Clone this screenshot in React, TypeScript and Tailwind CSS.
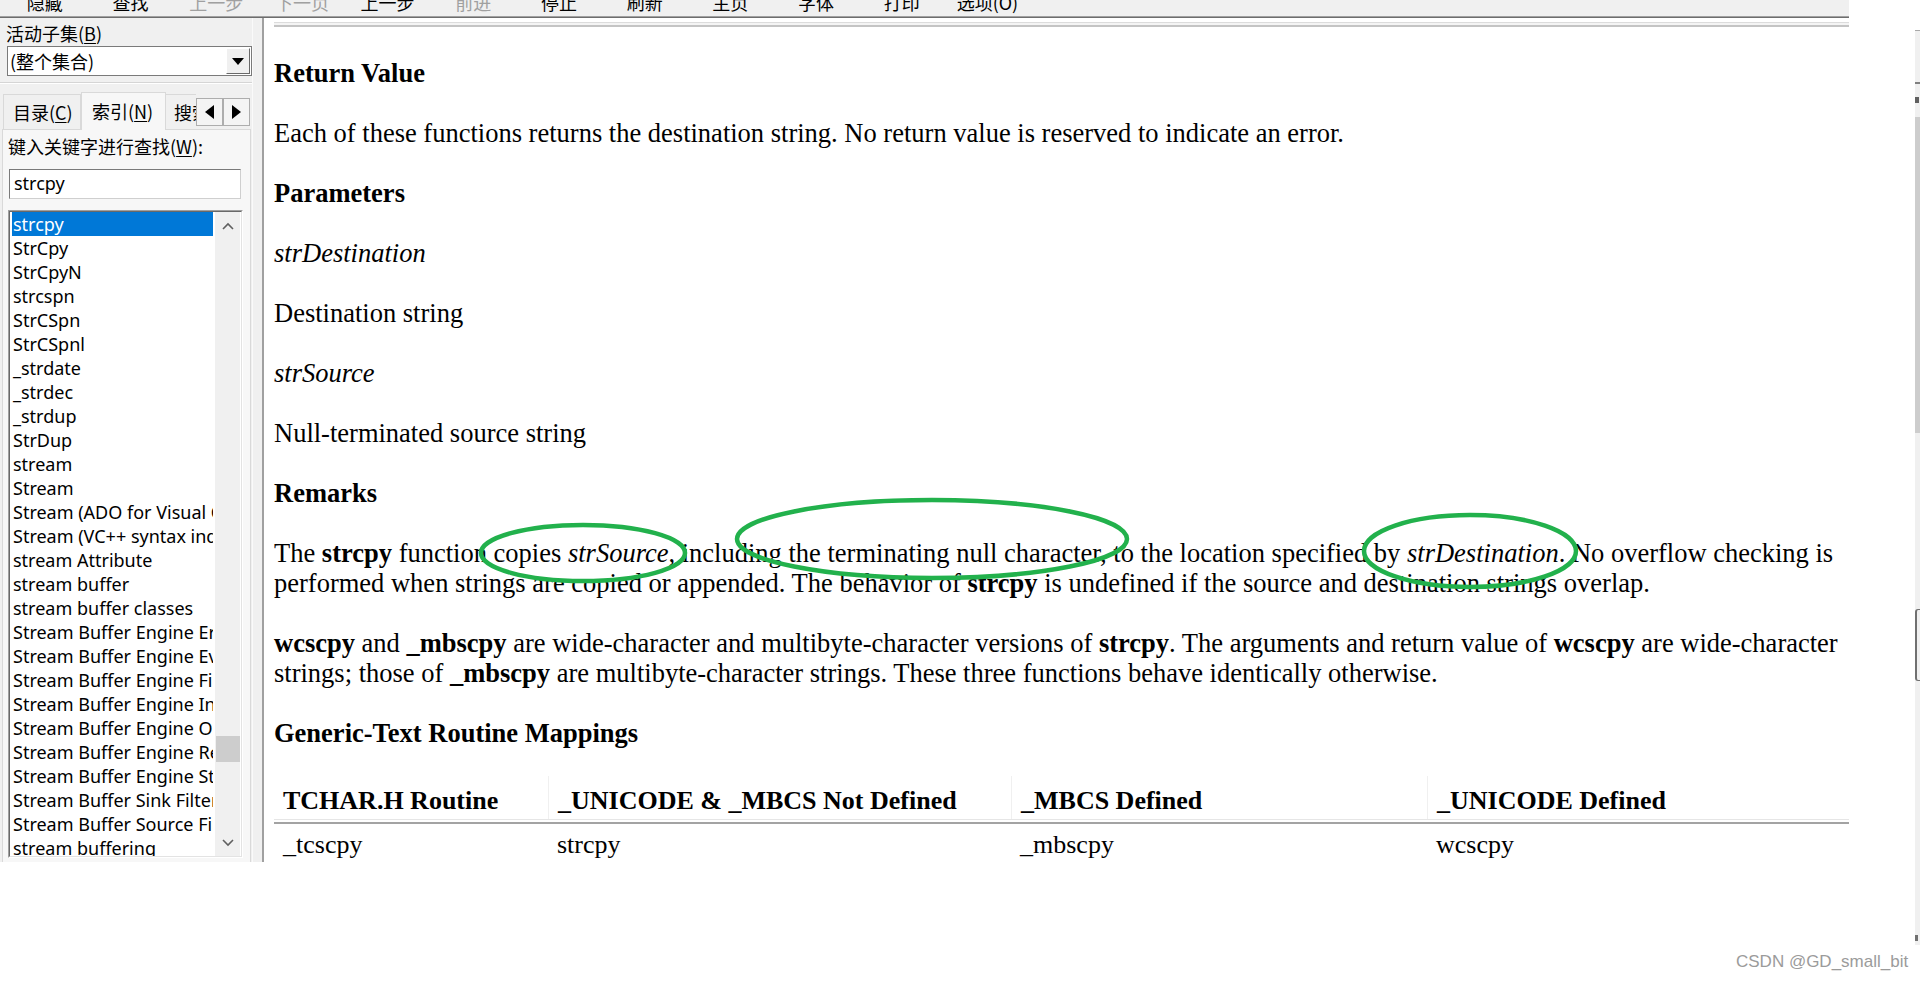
import React from "react";

const toolButtons = [
  { label: "隐藏", on: true },
  { label: "查找", on: true },
  { label: "上一步", on: false },
  { label: "下一页", on: false },
  { label: "上一步", on: true },
  { label: "前进", on: false },
  { label: "停止", on: true },
  { label: "刷新", on: true },
  { label: "主页", on: true },
  { label: "字体", on: true },
  { label: "打印", on: true },
  { label: "选项(O)", on: true },
];

const keywords = [
  "strcpy",
  "StrCpy",
  "StrCpyN",
  "strcspn",
  "StrCSpn",
  "StrCSpnl",
  "_strdate",
  "_strdec",
  "_strdup",
  "StrDup",
  "stream",
  "Stream",
  "Stream (ADO for Visual C++ Syntax)",
  "Stream (VC++ syntax index)",
  "stream Attribute",
  "stream buffer",
  "stream buffer classes",
  "Stream Buffer Engine Errors",
  "Stream Buffer Engine Events",
  "Stream Buffer Engine Filters",
  "Stream Buffer Engine Interfaces",
  "Stream Buffer Engine Objects",
  "Stream Buffer Engine Reference",
  "Stream Buffer Engine Structures",
  "Stream Buffer Sink Filter",
  "Stream Buffer Source Filter",
  "stream buffering",
];

const mappings = [
  ["TCHAR.H Routine", "_UNICODE & _MBCS Not Defined", "_MBCS Defined", "_UNICODE Defined"],
  ["_tcscpy", "strcpy", "_mbscpy", "wcscpy"],
];

const colW = ["w-[274px]", "w-[463px]", "w-[416px]", "w-[422px]"];

export default function App() {
  return (
    <div className="relative w-[1920px] h-[981px] bg-white overflow-hidden font-['Noto_Sans_CJK_SC',sans-serif] text-black">
      <div className="flex">
        {/* help viewer window */}
        <div className="w-[1849px] h-[862px] flex flex-col">
          <Toolbar />
          <div className="flex flex-1 min-h-0">
            <LeftPanel />
            <div className="w-[10px] bg-[#f0f0f0] border-l border-[#fafafa]" />
            <Content />
          </div>
        </div>

        <div className="flex-1" />

        {/* edge of the window behind */}
        <div className="w-[5px] mt-[30px] flex flex-col">
          <div className="h-[52px] bg-[#f0f0f0] border-t border-[#a8a8a8]" />
          <div className="h-[2px] bg-[#808080]" />
          <div className="h-[33px] bg-[#f0f0f0] pt-[13px]">
            <div className="h-[6px] w-[4px] bg-[#606060]" />
          </div>
          <div className="h-[316px] bg-[#cdcdcd]" />
          <div className="h-[512px] bg-[#f0f0f0] pt-[176px]">
            <div className="h-[72px] border-l-2 border-t border-b border-[#707070] rounded-tl-[3px] rounded-bl-[3px]" />
            <div className="mt-[254px] h-[6px] w-[3px] bg-[#707070]" />
          </div>
        </div>
      </div>

      <Annotations />

      <div className="absolute left-[1736px] top-[951px] text-[17px] leading-[22px] text-[#9b9b9b] font-['Liberation_Sans',Arial,sans-serif] whitespace-nowrap">
        CSDN @GD_small_bit
      </div>
    </div>
  );
}

function Toolbar() {
  return (
    <div>
      <div className="h-[16px] bg-[#f0f0f0] overflow-hidden flex pl-[2px]">
        {toolButtons.map((b, i) => (
          <div
            key={i}
            className={`w-[85.7px] shrink-0 mt-[-7px] text-center text-[18px] leading-[18px] whitespace-nowrap ${
              b.on ? "text-black" : "text-[#a0a0a0]"
            }`}
          >
            {b.label}
          </div>
        ))}
      </div>
      <div className="h-px bg-[#a0a0a0]" />
      <div className="h-px bg-[#6d6d6d]" />
    </div>
  );
}

function LeftPanel() {
  return (
    <div className="w-[252px] bg-[#f0f0f0] flex flex-col text-[18px]">
      <div className="mt-[4px] ml-[6px] leading-[22px]">
        活动子集(<u className="underline-offset-2">B</u>)
      </div>

      {/* subset combo */}
      <div className="mt-[2px] ml-[7px] w-[245px] h-[30px] flex bg-white border border-[#7a7a7a]">
        <div className="flex-1 pl-[2px] leading-[28px]">(整个集合)</div>
        <div className="w-[24px] m-px bg-[#f0f0f0] border border-t-white border-l-white border-r-[#696969] border-b-[#696969] flex items-center justify-center">
          <svg width="12" height="7" viewBox="0 0 12 7">
            <polygon points="0,0 12,0 6,7" fill="#000" />
          </svg>
        </div>
      </div>

      <div className="mt-[6px] h-px bg-[#d5d5d5]" />
      <div className="h-px bg-white" />

      {/* tabs */}
      <div className="mt-[8px] h-[37px] flex items-end pl-[3px]">
        <div className="w-[78px] h-[35px] border border-b-0 border-[#d9d9d9] bg-[#f0f0f0] flex items-center pl-[9px] leading-[24px] whitespace-nowrap">
          目录(<u className="underline-offset-2">C</u>)
        </div>
        <div className="relative z-10 -mb-px w-[85px] h-[38px] border border-b-0 border-[#d9d9d9] bg-[#f7f7f7] flex items-center pl-[10px] pb-px leading-[24px] whitespace-nowrap">
          索引(<u className="underline-offset-2">N</u>)
        </div>
        <div className="w-[30px] h-[35px] border-t border-r-0 border-[#d9d9d9] bg-[#f0f0f0] flex items-center pl-[8px] leading-[24px] whitespace-nowrap overflow-hidden">
          搜索(S)
        </div>
        <div className="self-start mt-[6px] flex">
          <ArrowButton dir="left" />
          <ArrowButton dir="right" />
        </div>
      </div>

      {/* tab page */}
      <div className="ml-[2px] w-[249px] flex-1 min-h-0 border border-b-0 border-[#d9d9d9] bg-[#f7f7f7] flex flex-col">
        <div className="mt-[4px] ml-[5px] leading-[24px] whitespace-nowrap">
          键入关键字进行查找(<u className="underline-offset-2">W</u>):
        </div>

        <div className="mt-[11px] ml-[6px] w-[232px] h-[30px] bg-white border border-t-[#7a7a7a] border-l-[#7a7a7a] border-r-[#cfcfcf] border-b-[#cfcfcf] pl-[4px] leading-[27px] font-['Noto_Sans',sans-serif] text-[18px]">
          strcpy
        </div>

        <div className="mt-[11px] ml-[5px] w-[235px] h-[648px] border border-t-[#a0a0a0] border-l-[#a0a0a0] border-r-white border-b-white">
          <div className="h-full border border-t-[#696969] border-l-[#696969] border-r-[#e3e3e3] border-b-[#e3e3e3] bg-white flex">
            <div className="w-[201px] ml-[2px] overflow-hidden font-['Noto_Sans',sans-serif] text-[18px]">
              {keywords.map((k, i) => (
                <div
                  key={k}
                  className={`h-[24px] leading-[24px] pl-px whitespace-nowrap ${
                    i === 0 ? "bg-[#0078d7] text-white" : ""
                  }`}
                >
                  {k}
                </div>
              ))}
            </div>
            <div className="ml-[2px] w-[25px] bg-[#f0f0f0] flex flex-col items-center">
              <svg className="mt-[10px]" width="12" height="8" viewBox="0 0 12 8">
                <polyline points="1,7 6,2 11,7" fill="none" stroke="#606060" strokeWidth="1.6" />
              </svg>
              <div className="mt-[506px] w-[24px] h-[26px] bg-[#cdcdcd]" />
              <svg className="mt-[77px]" width="12" height="8" viewBox="0 0 12 8">
                <polyline points="1,1 6,6 11,1" fill="none" stroke="#606060" strokeWidth="1.6" />
              </svg>
            </div>
          </div>
        </div>
      </div>
    </div>
  );
}

function ArrowButton({ dir }: { dir: "left" | "right" }) {
  return (
    <div className="w-[27px] h-[28px] bg-[#f4f4f4] border border-[#adadad] flex items-center justify-center">
      <svg width="9" height="14" viewBox="0 0 9 14">
        {dir === "left" ? (
          <polygon points="9,0 9,14 0,7" fill="#000" />
        ) : (
          <polygon points="0,0 0,14 9,7" fill="#000" />
        )}
      </svg>
    </div>
  );
}

function Content() {
  return (
    <div className="flex-1 min-w-0 bg-white border-l-2 border-[#a0a0a0] pl-[10px] overflow-hidden font-['Liberation_Serif','Times_New_Roman',serif] text-[26.5px] leading-[30px]">
      <div className="mt-[4px] h-[5px] border-t border-[#dcdcdc] border-b-2 border-b-[#c4c4c4] bg-[#f4f4f4]" />

      <div className="mt-[31px] font-bold">Return Value</div>
      <p className="mt-[30px]">
        Each of these functions returns the destination string. No return value is reserved to indicate an error.
      </p>

      <div className="mt-[30px] font-bold">Parameters</div>
      <p className="mt-[30px] italic">strDestination</p>
      <p className="mt-[30px]">Destination string</p>
      <p className="mt-[30px] italic">strSource</p>
      <p className="mt-[30px]">Null-terminated source string</p>

      <div className="mt-[30px] font-bold">Remarks</div>
      <p className="mt-[30px]">
        The <b>strcpy</b> function copies <i>strSource</i>, including the terminating null character, to the
        location specified by <i>strDestination</i>. No overflow checking is performed when strings are copied or
        appended. The behavior of <b>strcpy</b> is undefined if the source and destination strings overlap.
      </p>
      <p className="mt-[30px]">
        <b>wcscpy</b> and <b>_mbscpy</b> are wide-character and multibyte-character versions of <b>strcpy</b>. The
        arguments and return value of <b>wcscpy</b> are wide-character strings; those of <b>_mbscpy</b> are
        multibyte-character strings. These three functions behave identically otherwise.
      </p>

      <div className="mt-[30px] font-bold">Generic-Text Routine Mappings</div>

      {/* mapping table */}
      <div className="mt-[28px] text-[26px]">
        <div className="flex">
          {mappings[0].map((h, i) => (
            <div
              key={h}
              className={`${colW[i]} pt-[10px] pb-[3px] pl-[9px] font-bold whitespace-nowrap ${
                i > 0 ? "border-l border-[#f0f0f0]" : ""
              }`}
            >
              {h}
            </div>
          ))}
        </div>
        <div className="h-px bg-[#e6e6e6]" />
        <div className="mt-[2px] h-[2px] bg-[#a3a3a3]" />
        <div className="flex pt-[6px]">
          {mappings[1].map((c, i) => (
            <div key={c} className={`${colW[i]} pl-[9px] whitespace-nowrap`}>
              {c}
            </div>
          ))}
        </div>
      </div>
    </div>
  );
}

function Annotations() {
  return (
    <svg className="absolute left-0 top-0 pointer-events-none" width="1920" height="981">
      <g fill="none" stroke="#22b14c" strokeWidth="4.5">
        <ellipse cx="583" cy="553" rx="102" ry="28" />
        <ellipse cx="932" cy="539" rx="195" ry="39" />
        <ellipse cx="1470" cy="551" rx="106" ry="36" />
      </g>
    </svg>
  );
}
